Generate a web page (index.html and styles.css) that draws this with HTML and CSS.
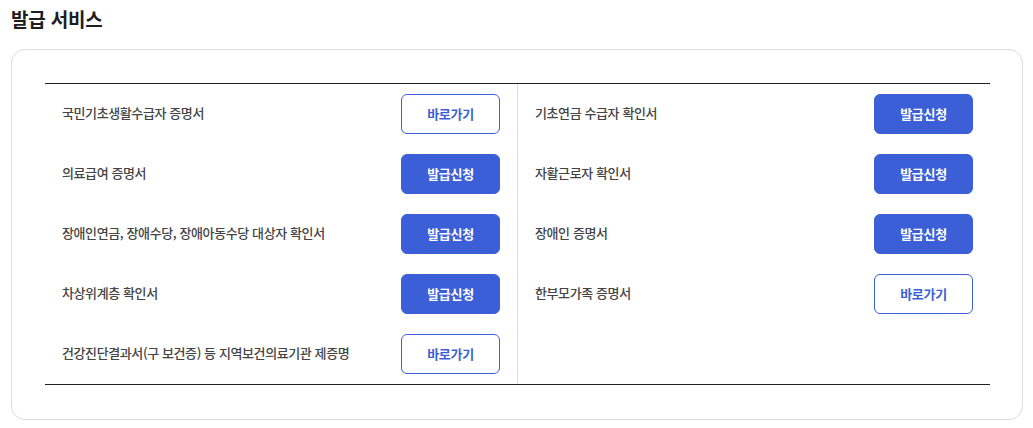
FILE: index.html
```html
<!DOCTYPE html>
<html lang="ko">
<head>
<meta charset="utf-8">
<link rel="stylesheet" href="styles.css">
</head>
<body>
<h2 class="title">발급 서비스</h2>
<div class="card">
  <div class="grid">
    <div class="col">
      <div class="row"><span class="label">국민기초생활수급자 증명서</span><a class="btn outline">바로가기</a></div>
      <div class="row"><span class="label">의료급여 증명서</span><a class="btn fill">발급신청</a></div>
      <div class="row"><span class="label">장애인연금, 장애수당, 장애아동수당 대상자 확인서</span><a class="btn fill">발급신청</a></div>
      <div class="row"><span class="label">차상위계층 확인서</span><a class="btn fill">발급신청</a></div>
      <div class="row"><span class="label">건강진단결과서(구 보건증) 등 지역보건의료기관 제증명</span><a class="btn outline">바로가기</a></div>
    </div>
    <div class="col right">
      <div class="row"><span class="label">기초연금 수급자 확인서</span><a class="btn fill">발급신청</a></div>
      <div class="row"><span class="label">자활근로자 확인서</span><a class="btn fill">발급신청</a></div>
      <div class="row"><span class="label">장애인 증명서</span><a class="btn fill">발급신청</a></div>
      <div class="row"><span class="label">한부모가족 증명서</span><a class="btn outline">바로가기</a></div>
    </div>
  </div>
</div>
</body>
</html>
```
FILE: styles.css
```css
* { box-sizing: border-box; }
body {
  margin: 0;
  padding: 0 10px 0 11px;
  background: #fff;
  font-family: "Noto Sans CJK KR", "Noto Sans", sans-serif;
  color: #222;
}
.title {
  margin: 0;
  padding: 5px 0 0 0;
  height: 49px;
  font-size: 19px;
  font-weight: 700;
  letter-spacing: -0.2px;
  color: #1e1e1e;
  line-height: 28px;
}
.card {
  border: 1px solid #dcdcdc;
  border-radius: 14px;
  padding: 33px 32px 34px 33px;
}
.grid {
  display: grid;
  grid-template-columns: 472px 1fr;
  border-top: 1px solid #222;
  border-bottom: 1px solid #222;
}
.col.right { border-left: 1px solid #dedede; }
.row {
  height: 60px;
  display: flex;
  align-items: center;
  justify-content: space-between;
  padding: 0 17px 0 17px;
}
.label {
  font-size: 13px;
  font-weight: 500;
  color: #444;
  letter-spacing: -0.4px;
  padding-bottom: 3px;
}
.btn {
  width: 99px;
  height: 40px;
  border-radius: 6px;
  display: flex;
  align-items: center;
  justify-content: center;
  font-size: 13px;
  font-weight: 700;
  letter-spacing: -0.3px;
  padding-bottom: 1px;
}
.btn.fill { background: #3c5fd8; color: #fff; border: 1px solid #3c5fd8; }
.btn.outline { background: #fff; color: #3c5fd8; border: 1px solid #3c5fd8; }
```
